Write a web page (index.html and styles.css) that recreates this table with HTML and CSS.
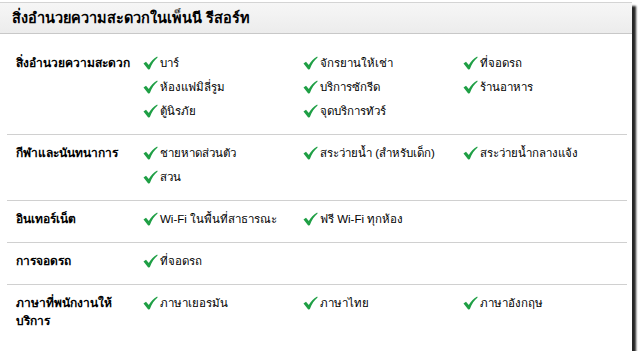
FILE: index.html
```html
<!DOCTYPE html>
<html lang="th">
<head>
<meta charset="UTF-8">
<title>สิ่งอำนวยความสะดวกในเพ็นนี รีสอร์ท</title>
<link rel="stylesheet" href="styles.css">
</head>
<body>

<div class="panel">

<div class="panel-head">สิ่งอำนวยความสะดวกในเพ็นนี รีสอร์ท</div>

<div class="group first">
<div class="label">สิ่งอำนวยความสะดวก</div>
<ul class="items">
<li><i class="tick"></i>บาร์</li>
<li><i class="tick"></i>จักรยานให้เช่า</li>
<li><i class="tick"></i>ที่จอดรถ</li>
<li><i class="tick"></i>ห้องแฟมิลี่รูม</li>
<li><i class="tick"></i>บริการซักรีด</li>
<li><i class="tick"></i>ร้านอาหาร</li>
<li><i class="tick"></i>ตู้นิรภัย</li>
<li><i class="tick"></i>จุดบริการทัวร์</li>
</ul>
</div>

<div class="group">
<div class="label">กีฬาและนันทนาการ</div>
<ul class="items">
<li><i class="tick"></i>ชายหาดส่วนตัว</li>
<li><i class="tick"></i>สระว่ายน้ำ (สำหรับเด็ก)</li>
<li><i class="tick"></i>สระว่ายน้ำกลางแจ้ง</li>
<li><i class="tick"></i>สวน</li>
</ul>
</div>

<div class="group">
<div class="label">อินเทอร์เน็ต</div>
<ul class="items">
<li><i class="tick"></i>Wi-Fi ในพื้นที่สาธารณะ</li>
<li><i class="tick"></i>ฟรี Wi-Fi ทุกห้อง</li>
</ul>
</div>

<div class="group">
<div class="label">การจอดรถ</div>
<ul class="items">
<li><i class="tick"></i>ที่จอดรถ</li>
</ul>
</div>

<div class="group last">
<div class="label">ภาษาที่พนักงานให้บริการ</div>
<ul class="items">
<li><i class="tick"></i>ภาษาเยอรมัน</li>
<li><i class="tick"></i>ภาษาไทย</li>
<li><i class="tick"></i>ภาษาอังกฤษ</li>
</ul>
</div>

</div>

</body>
</html>
```

FILE: styles.css
```css
body{
margin:0;
background:white;
font-family:"Liberation Sans", "DejaVu Sans", "Noto Sans", sans-serif;
font-size:11.5px;
color:#000;
}

.panel{
width:632px;
height:348px;
margin-top:2px;
border-top:1px solid #d4d4d4;
background:white;
box-shadow:4px 4px 2px rgba(0,0,0,.85);
}

.panel-head{
height:30px;
line-height:30px;
padding-left:12px;
background:linear-gradient(#f6f6f6,#ececec);
border-bottom:1px solid #c8c8c8;
font-size:14.5px;
font-weight:bold;
}

.group{
display:flex;
align-items:flex-start;
margin:0 5px 0 7px;
padding:6px 0 11px;
border-bottom:1px solid #d0d0d0;
}

.group.first{
padding-top:17px;
}

.group.last{
border-bottom:none;
}

.label{
width:127px;
padding:3px 0 0 9px;
font-size:12px;
font-weight:bold;
line-height:18px;
}

.items{
list-style:none;
margin:0;
padding:0;
display:grid;
grid-template-columns:repeat(3,160px);
align-items:start;
}

.items li{
height:24px;
display:flex;
align-items:center;
}

/* green check drawn as svg */
.tick{
width:15px;
height:14px;
margin-right:2px;
background:no-repeat center/15px 14px url("data:image/svg+xml;utf8,<svg xmlns='http://www.w3.org/2000/svg' viewBox='0 0 15 14'><path d='M0.5 7.6 L3 5.8 L5.8 9 C7.8 5.6 10.4 2.8 14.2 0.6 L14.6 1.6 C11.4 4.2 8.8 7.8 6.8 13.2 L5.2 13.4 Z' fill='%231f9f45'/></svg>");
}
```
